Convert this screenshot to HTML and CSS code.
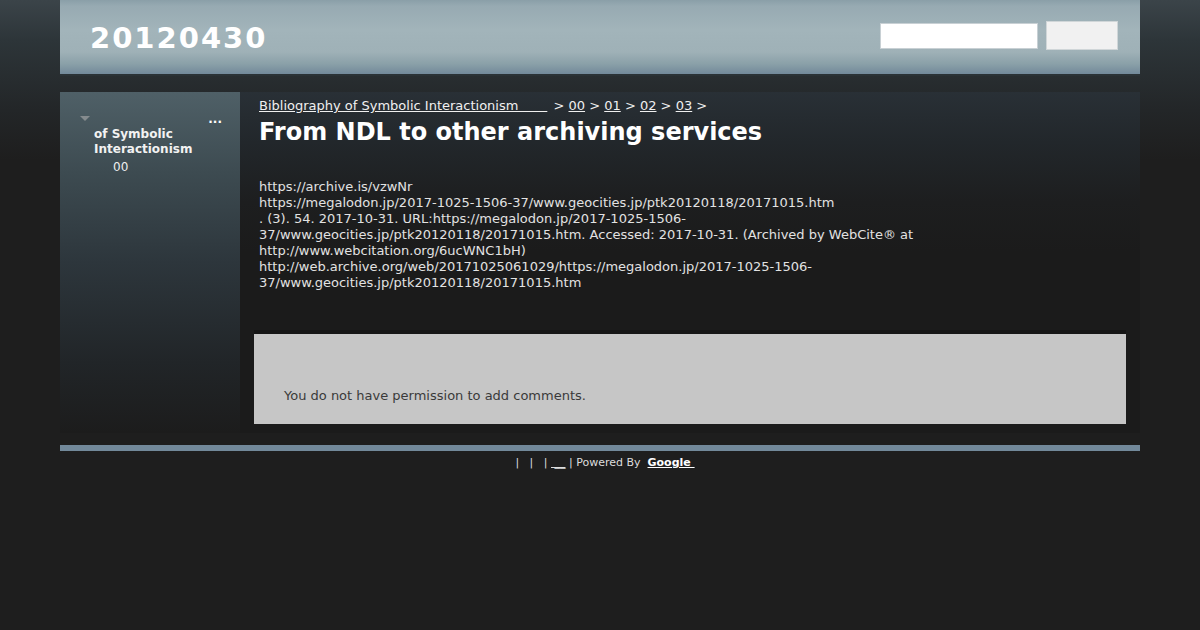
FILE: index.html
```html
<!DOCTYPE html>
<html lang="en">
<head>
    <meta charset="UTF-8">
    <title>From NDL to other archiving services - 20120430</title>
    <link rel="stylesheet" href="styles.css">
</head>
<body>

<div class="page">
    <!-- Header -->
    <div class="header">
        <h1 class="site-title">20120430</h1>
        <form class="search">
            <input type="text" class="search-box">
            <button type="button" class="search-btn"></button>
        </form>
    </div>

    <div class="content">
        <!-- Sidebar -->
        <div class="sidebar">
            <div class="nav-head">
                <span class="nav-toggle"></span>
                <span class="nav-more">...</span>
            </div>
            <div class="nav-item">of Symbolic Interactionism</div>
            <div class="nav-sub">00</div>
        </div>

        <!-- Main -->
        <div class="main">
            <div class="breadcrumb">
                <a href="#" class="crumb-root">Bibliography of Symbolic Interactionism&nbsp;&nbsp;&nbsp;&nbsp;&nbsp;&nbsp;&nbsp;</a>
                &gt; <a href="#">00</a> &gt; <a href="#">01</a> &gt; <a href="#">02</a> &gt; <a href="#">03</a> &gt;
            </div>
            <h2 class="page-title">From NDL to other archiving services</h2>

            <div class="page-body">
                https://archive.is/vzwNr<br>
                https://megalodon.jp/2017-1025-1506-37/www.geocities.jp/ptk20120118/20171015.htm<br>
                . (3). 54. 2017-10-31. URL:https://megalodon.jp/2017-1025-1506-<br>37/www.geocities.jp/ptk20120118/20171015.htm. Accessed: 2017-10-31. (Archived by WebCite® at<br>http://www.webcitation.org/6ucWNC1bH)<br>
                http://web.archive.org/web/20171025061029/https://megalodon.jp/2017-1025-1506-<br>37/www.geocities.jp/ptk20120118/20171015.htm
            </div>

            <div class="comments">
                <p>You do not have permission to add comments.</p>
            </div>
        </div>
    </div>

    <!-- Footer -->
    <div class="footer-bar"></div>
    <div class="footer">
        | &nbsp; | &nbsp; | <a href="#" class="plain">&nbsp;__</a> | Powered By &nbsp;<a href="#" class="google">Google&nbsp;</a>
    </div>
</div>

</body>
</html>
```

FILE: styles.css
```css
body {
    margin: 0;
    font-family: "DejaVu Sans", Verdana, sans-serif;
    background: #1e1e1e linear-gradient(to bottom, #3b4449 0px, #2d3539 40px, #232628 110px, #1e1e1e 160px) no-repeat;
    color: #ddd;
}

.page {
    width: 1080px;
    margin: 0 auto;
}

/* Header */
.header {
    height: 74px;
    display: flex;
    align-items: flex-start;
    justify-content: space-between;
    padding: 0 22px 0 30px;
    box-sizing: content-box;
    background: linear-gradient(to bottom, #8a9fa8 0px, #97aab2 6px, #a2b4ba 30px, #9fb1b7 52px, #8aa0a8 64px, #72899a 74px);
    border-bottom: 2px solid #2a3236;
}

.site-title {
    margin: 20px 0 0 0;
    color: #fff;
    font-size: 29px;
    font-weight: bold;
    line-height: 36px;
    letter-spacing: 2px;
}

.search {
    display: flex;
    align-items: flex-start;
    gap: 8px;
    margin: 21px 0 0 0;
}

.search-box {
    width: 156px;
    height: 24px;
    margin: 2px 0 0 0;
    padding: 0;
    border: 1px solid #c8d0d4;
    background: #fff;
}

.search-btn {
    width: 72px;
    height: 29px;
    border: 1px solid #d0d6d8;
    background: #f1f1f1;
    margin: 0;
}

/* Content */
.content {
    display: flex;
    margin-top: 16px;
    height: 341px;
}

.sidebar {
    width: 180px;
    padding: 20px 18px 0 20px;
    box-sizing: border-box;
    background: linear-gradient(to bottom, #4f6067 0px, #3d4b51 80px, #2d363c 170px, #212528 270px, #1c1c1c 341px);
}

.nav-head {
    display: flex;
    justify-content: space-between;
    height: 15px;
}

.nav-toggle {
    width: 0;
    height: 0;
    margin-top: 4px;
    border-left: 5px solid transparent;
    border-right: 5px solid transparent;
    border-top: 5px solid #858b8e;
}

.nav-more {
    color: #fff;
    font-size: 12px;
    font-weight: bold;
    line-height: 12px;
    margin-top: 1px;
}

.nav-item {
    margin-left: 14px;
    color: #f2f2f2;
    font-size: 12px;
    font-weight: bold;
    line-height: 15px;
}

.nav-sub {
    margin: 3px 0 0 33px;
    color: #eee;
    font-size: 12px;
    line-height: 15px;
}

.main {
    flex: 1;
    padding: 5px 14px 0 14px;
    background: linear-gradient(to bottom, #293036 0px, #22272b 50px, #1d1e1f 110px, #1b1b1b 160px);
}

.breadcrumb {
    padding-left: 5px;
    font-size: 13px;
    line-height: 17px;
    color: #eee;
}

.breadcrumb a {
    color: #f0f0f0;
}

.breadcrumb .crumb-root {
    margin-right: 2px;
}

.page-title {
    margin: 3px 0 0 5px;
    color: #fff;
    font-size: 24px;
    font-weight: bold;
    line-height: 30px;
}

.page-body {
    margin: 32px 0 0 5px;
    width: 680px;
    font-size: 13px;
    line-height: 16px;
    color: #e2e2e2;
}

.comments {
    margin-top: 39px;
    height: 94px;
    background: #c6c6c6;
    border-top: 4px solid #151515;
    padding: 0 30px;
    box-sizing: border-box;
}

.comments p {
    margin: 0;
    padding-top: 54px;
    font-size: 13px;
    color: #3a3a3a;
}

/* Footer */
.footer-bar {
    margin-top: 12px;
    height: 6px;
    background: #72899a;
}

.footer {
    text-align: center;
    padding-left: 10px;
    font-size: 11px;
    line-height: 24px;
    color: #ddd;
}

.footer a.plain {
    color: #ddd;
}

.footer a.google {
    color: #fff;
    font-weight: bold;
}
```
